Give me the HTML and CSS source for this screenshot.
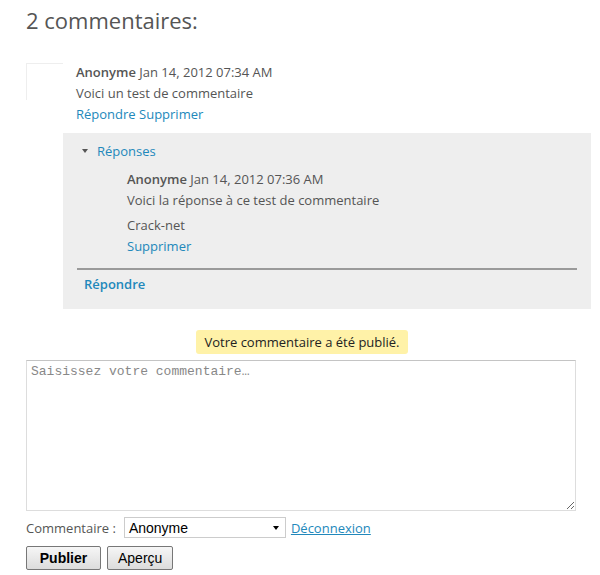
FILE: index.html
```html
<!DOCTYPE html>
<html lang="fr">
<head>
<meta charset="utf-8">
<link rel="stylesheet" href="styles.css">
</head>
<body>
<div class="page">
  <h2 class="title">2 commentaires:</h2>
  <div class="comment">
    <div class="avatar"></div>
    <div class="comment-body">
      <div class="line"><span class="author">Anonyme</span> <span class="date">Jan 14, 2012 07:34 AM</span></div>
      <div class="line">Voici un test de commentaire</div>
      <div class="line"><a class="link">Répondre</a> <a class="link">Supprimer</a></div>
    </div>
  </div>
  <div class="replies">
    <div class="replies-head"><span class="tri"></span><a class="link">Réponses</a></div>
    <div class="reply">
      <div class="line"><span class="author">Anonyme</span> <span class="date">Jan 14, 2012 07:36 AM</span></div>
      <div class="line">Voici la réponse à ce test de commentaire</div>
      <div class="line sig">Crack-net</div>
      <div class="line"><a class="link">Supprimer</a></div>
    </div>
    <div class="divider"></div>
    <div class="reply-link"><a class="link strong">Répondre</a></div>
  </div>
  <div class="notice-row"><span class="notice">Votre commentaire a été publié.</span></div>
  <textarea class="box" placeholder="Saisissez votre commentaire…"></textarea>
  <div class="identity">
    <span class="label">Commentaire :</span>
    <div class="select"><span>Anonyme</span><span class="caret"></span></div>
    <a class="logout">Déconnexion</a>
  </div>
  <div class="buttons">
    <button class="btn bold">Publier</button>
    <button class="btn">Aperçu</button>
  </div>
</div>
</body>
</html>
```
FILE: styles.css
```css
html, body { margin: 0; padding: 0; background: #fff; }
body { font-family: "Open Sans", "DejaVu Sans", sans-serif; font-size: 13px; color: #555; }
.page { padding: 0 9px 0 26px; }
.title { margin: 0; padding-top: 5px; font-size: 22px; font-weight: normal; line-height: 30px; color: #555; }
.comment { display: flex; margin-top: 27px; }
.avatar { width: 36px; height: 36px; border-top: 1px solid #eee; border-left: 1px solid #eee; margin-right: 13px; margin-top: 1px; }
.line { line-height: 21px; }
.author { font-weight: 600; }
.link { color: #2288bb; cursor: pointer; }
.replies { margin: 8px 0 0 37px; background: #eee; padding: 7px 14px 13px 14px; }
.replies-head { display: flex; align-items: center; line-height: 22px; }
.tri { width: 0; height: 0; border-left: 3.5px solid transparent; border-right: 3.5px solid transparent; border-top: 4px solid #555; margin: 0 9px 0 5px; }
.reply { padding: 7px 0 0 50px; }
.sig { margin-top: 4px; }
.divider { height: 2px; background: #9a9a9a; margin-top: 11px; }
.reply-link { padding-left: 7px; line-height: 24px; margin-top: 2px; }
.strong { font-weight: 600; }
.notice-row { text-align: center; margin-top: 21px; padding-right: 13px; }
.notice { display: inline-block; background: #fff2a8; color: #222; padding: 0 8px; line-height: 24px; border-radius: 3px; }
.box { display: block; box-sizing: border-box; width: 550px; height: 151px; margin-top: 6px; border: 1px solid #ddd; border-top-color: #c4c4c4; font-family: "Liberation Mono", monospace; font-size: 13px; padding: 3px 4px; resize: both; }
.box::placeholder { color: #888; }
.identity { display: flex; align-items: center; margin-top: 6px; }
.label { margin-right: 8px; }
.select { display: flex; align-items: center; justify-content: space-between; box-sizing: border-box; width: 162px; height: 21px; border: 1px solid #ccc; padding: 0 6px 0 4px; font-family: "Liberation Sans", Arial, sans-serif; font-size: 14px; color: #000; }
.caret { width: 0; height: 0; border-left: 3.5px solid transparent; border-right: 3.5px solid transparent; border-top: 4px solid #000; }
.logout { color: #2288bb; text-decoration: underline; margin-left: 5px; }
.buttons { display: flex; gap: 6px; margin-top: 8px; }
.btn { font-family: "Liberation Sans", Arial, sans-serif; font-size: 14px; color: #000; height: 24px; padding: 0 10px; border: 1px solid #777; border-radius: 2px; background: linear-gradient(#f6f6f6, #dcdcdc); }
.bold { font-weight: bold; width: 75px; }
```
